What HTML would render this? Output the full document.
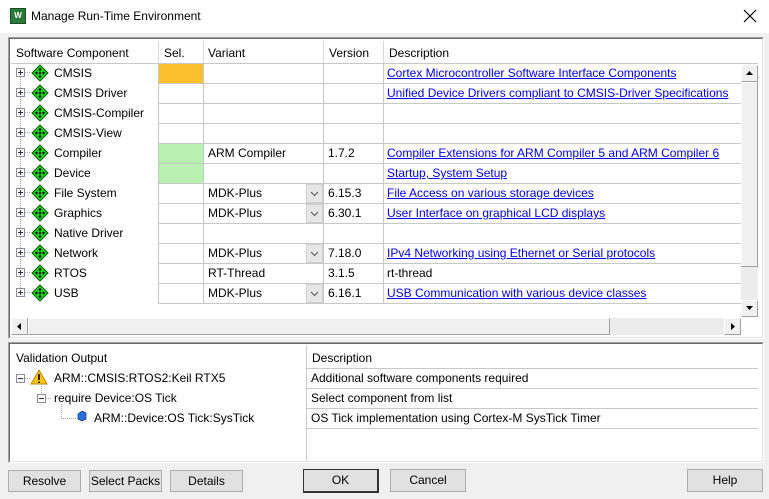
<!DOCTYPE html>
<html><head><meta charset="utf-8"><style>
*{box-sizing:border-box;margin:0;padding:0}
body{width:769px;height:499px;background:#f0f0f0;font-family:"Liberation Sans",sans-serif;font-size:12px;color:#000;position:relative;overflow:hidden}
.a{position:absolute}
.t{position:absolute;white-space:nowrap;line-height:20px}
a{color:#0000ee;text-decoration:underline}
.hl{position:absolute;height:1px;background:#d8d8d8}
.vl{position:absolute;width:1px;background:#d8d8d8}
.btn{position:absolute;background:#e1e1e1;border:1px solid #adadad;text-align:center;line-height:20px;font-size:12px}
.pl{position:absolute;width:9px;height:9px;border:1px solid #8c8c9c;background:#fff;font-size:9px;line-height:7px;text-align:center;color:#333}
.dd{position:absolute;width:17px;height:18px;background:#e6e6e6;border:1px solid #d0d0d0}
</style></head><body>
<div class="a" style="left:0;top:0;width:769px;height:33px;background:#fff"></div>
<div class="a" style="left:10px;top:8px;width:16px;height:16px;background:#2c7a3a;border:1px solid #164d20;color:#fff;font-size:8px;font-weight:bold;text-align:center;line-height:14px">W</div>
<div class="t" style="left:31px;top:6px;font-size:12px">Manage Run-Time Environment</div>
<svg class="a" style="left:743px;top:9px" width="14" height="14"><path d="M1 1L13 13M13 1L1 13" stroke="#000" stroke-width="1.2"/></svg>

<!-- upper panel -->
<div class="a" style="left:8px;top:37px;width:756px;height:302px;border:1px solid #a0a0a0;border-right-color:#fff;border-bottom-color:#fff;background:#fff"></div>
<div class="a" style="left:9px;top:38px;width:754px;height:300px;border:1px solid #696969;border-right-color:#e3e3e3;border-bottom-color:#e3e3e3"></div>
<div class="t" style="left:16px;top:43px">Software Component</div>
<div class="t" style="left:164px;top:43px">Sel.</div>
<div class="t" style="left:208px;top:43px">Variant</div>
<div class="t" style="left:329px;top:43px">Version</div>
<div class="t" style="left:389px;top:43px">Description</div>
<div class="vl" style="left:158px;top:41px;height:22px"></div>
<div class="vl" style="left:203px;top:41px;height:22px"></div>
<div class="vl" style="left:323px;top:41px;height:22px"></div>
<div class="vl" style="left:383px;top:41px;height:22px"></div>
<div class="hl" style="left:11px;top:63px;width:747px;background:#c8c8c8"></div>
<!-- grid -->
<div class="a" style="left:159px;top:64px;width:44px;height:19px;background:#fbc02d"></div>
<div class="a" style="left:159px;top:144px;width:44px;height:19px;background:#b8f0b0"></div>
<div class="a" style="left:159px;top:164px;width:44px;height:19px;background:#b8f0b0"></div>
<div class="vl" style="left:158px;top:63px;height:240px;background:#c8c8c8"></div>
<div class="vl" style="left:203px;top:63px;height:240px;background:#c8c8c8"></div>
<div class="vl" style="left:323px;top:63px;height:240px;background:#c8c8c8"></div>
<div class="vl" style="left:383px;top:63px;height:240px;background:#c8c8c8"></div>
<div class="hl" style="left:158px;top:83px;width:583px;background:#c8c8c8"></div>
<div class="hl" style="left:158px;top:103px;width:583px;background:#c8c8c8"></div>
<div class="hl" style="left:158px;top:123px;width:583px;background:#c8c8c8"></div>
<div class="hl" style="left:158px;top:143px;width:583px;background:#c8c8c8"></div>
<div class="hl" style="left:158px;top:163px;width:583px;background:#c8c8c8"></div>
<div class="hl" style="left:158px;top:183px;width:583px;background:#c8c8c8"></div>
<div class="hl" style="left:158px;top:203px;width:583px;background:#c8c8c8"></div>
<div class="hl" style="left:158px;top:223px;width:583px;background:#c8c8c8"></div>
<div class="hl" style="left:158px;top:243px;width:583px;background:#c8c8c8"></div>
<div class="hl" style="left:158px;top:263px;width:583px;background:#c8c8c8"></div>
<div class="hl" style="left:158px;top:283px;width:583px;background:#c8c8c8"></div>
<div class="hl" style="left:158px;top:303px;width:583px;background:#c8c8c8"></div>
<div class="vl" style="left:20px;top:68px;height:228px;background:none;border-left:1px dotted #a0a0a0"></div>
<svg class="a" style="left:0;top:63px" width="60" height="240">
<defs><g id="dm"><path d="M0 -8L8 0L0 8L-8 0Z" fill="#1ed01e" stroke="#0a600a" stroke-width="1"/><circle cx="0" cy="-3.5" r="1.2"/><circle cx="0" cy="3.5" r="1.2"/><circle cx="-3.5" cy="0" r="1.2"/><circle cx="3.5" cy="0" r="1.2"/><circle cx="0" cy="0" r="1.2"/></g>
<g id="pb"><rect x="16.5" y="5.5" width="8" height="8" fill="#fff" stroke="#8c8c9c"/><path d="M18 9.5h5M20.5 7v5" stroke="#334"/><path d="M25 9.5h6" stroke="#aaa" stroke-dasharray="1 1"/></g></defs>
<g><use href="#pb"/><use href="#dm" x="40" y="10"/></g>
<g transform="translate(0,20)"><use href="#pb"/><use href="#dm" x="40" y="10"/></g>
<g transform="translate(0,40)"><use href="#pb"/><use href="#dm" x="40" y="10"/></g>
<g transform="translate(0,60)"><use href="#pb"/><use href="#dm" x="40" y="10"/></g>
<g transform="translate(0,80)"><use href="#pb"/><use href="#dm" x="40" y="10"/></g>
<g transform="translate(0,100)"><use href="#pb"/><use href="#dm" x="40" y="10"/></g>
<g transform="translate(0,120)"><use href="#pb"/><use href="#dm" x="40" y="10"/></g>
<g transform="translate(0,140)"><use href="#pb"/><use href="#dm" x="40" y="10"/></g>
<g transform="translate(0,160)"><use href="#pb"/><use href="#dm" x="40" y="10"/></g>
<g transform="translate(0,180)"><use href="#pb"/><use href="#dm" x="40" y="10"/></g>
<g transform="translate(0,200)"><use href="#pb"/><use href="#dm" x="40" y="10"/></g>
<g transform="translate(0,220)"><use href="#pb"/><use href="#dm" x="40" y="10"/></g>
</svg>
<div class="t" style="left:54px;top:63px">CMSIS</div>
<div class="t" style="left:54px;top:83px">CMSIS Driver</div>
<div class="t" style="left:54px;top:103px">CMSIS-Compiler</div>
<div class="t" style="left:54px;top:123px">CMSIS-View</div>
<div class="t" style="left:54px;top:143px">Compiler</div>
<div class="t" style="left:54px;top:163px">Device</div>
<div class="t" style="left:54px;top:183px">File System</div>
<div class="t" style="left:54px;top:203px">Graphics</div>
<div class="t" style="left:54px;top:223px">Native Driver</div>
<div class="t" style="left:54px;top:243px">Network</div>
<div class="t" style="left:54px;top:263px">RTOS</div>
<div class="t" style="left:54px;top:283px">USB</div>

<div class="t" style="left:208px;top:143px">ARM Compiler</div><div class="t" style="left:328px;top:143px">1.7.2</div>
<div class="t" style="left:208px;top:183px">MDK-Plus</div><div class="t" style="left:328px;top:183px">6.15.3</div>
<div class="t" style="left:208px;top:203px">MDK-Plus</div><div class="t" style="left:328px;top:203px">6.30.1</div>
<div class="t" style="left:208px;top:243px">MDK-Plus</div><div class="t" style="left:328px;top:243px">7.18.0</div>
<div class="t" style="left:208px;top:263px">RT-Thread</div><div class="t" style="left:328px;top:263px">3.1.5</div>
<div class="t" style="left:208px;top:283px">MDK-Plus</div><div class="t" style="left:328px;top:283px">6.16.1</div>
<svg class="a" style="left:306px;top:184px" width="17" height="120">
<g fill="#e6e6e6" stroke="#d0d0d0"><rect x=".5" y=".5" width="16" height="18"/><rect x=".5" y="20.5" width="16" height="18"/><rect x=".5" y="60.5" width="16" height="18"/><rect x=".5" y="100.5" width="16" height="18"/></g>
<g fill="none" stroke="#555"><path d="M5 8l3.5 3.5L12 8"/><path d="M5 28l3.5 3.5L12 28"/><path d="M5 68l3.5 3.5L12 68"/><path d="M5 108l3.5 3.5L12 108"/></g></svg>

<div class="t" style="left:387px;top:63px"><a>Cortex Microcontroller Software Interface Components</a></div>
<div class="t" style="left:387px;top:83px"><a>Unified Device Drivers compliant to CMSIS-Driver Specifications</a></div>
<div class="t" style="left:387px;top:143px"><a>Compiler Extensions for ARM Compiler 5 and ARM Compiler 6</a></div>
<div class="t" style="left:387px;top:163px"><a>Startup, System Setup</a></div>
<div class="t" style="left:387px;top:183px"><a>File Access on various storage devices</a></div>
<div class="t" style="left:387px;top:203px"><a>User Interface on graphical LCD displays</a></div>
<div class="t" style="left:387px;top:243px"><a>IPv4 Networking using Ethernet or Serial protocols</a></div>
<div class="t" style="left:387px;top:263px">rt-thread</div>
<div class="t" style="left:387px;top:283px"><a>USB Communication with various device classes</a></div>

<!-- vertical scrollbar -->
<div class="a" style="left:741px;top:65px;width:17px;height:252px;background:#ececec"></div>
<div class="a" style="left:741px;top:65px;width:17px;height:17px;background:#f0f0f0;border:1px solid #a0a0a0;border-top-color:#fff;border-left-color:#fff"></div>
<svg class="a" style="left:745px;top:70px" width="9" height="6"><path d="M1 5L4.5 1L8 5Z"/></svg>
<div class="a" style="left:741px;top:82px;width:17px;height:185px;background:#f0f0f0;border:1px solid #a0a0a0;border-top-color:#fff;border-left-color:#fff"></div>
<div class="a" style="left:741px;top:300px;width:17px;height:17px;background:#f0f0f0;border:1px solid #a0a0a0;border-top-color:#fff;border-left-color:#fff"></div>
<svg class="a" style="left:745px;top:305px" width="9" height="6"><path d="M1 1L4.5 5L8 1Z"/></svg>
<!-- horizontal scrollbar -->
<div class="a" style="left:11px;top:318px;width:730px;height:17px;background:#ececec"></div>
<div class="a" style="left:11px;top:318px;width:17px;height:17px;background:#f0f0f0;border:1px solid #a0a0a0;border-top-color:#fff;border-left-color:#fff"></div>
<svg class="a" style="left:16px;top:322px" width="6" height="9"><path d="M5 1L1 4.5L5 8Z"/></svg>
<div class="a" style="left:28px;top:318px;width:582px;height:17px;background:#f0f0f0;border:1px solid #a0a0a0;border-top-color:#fff;border-left-color:#fff"></div>
<div class="a" style="left:724px;top:318px;width:17px;height:17px;background:#f0f0f0;border:1px solid #a0a0a0;border-top-color:#fff;border-left-color:#fff"></div>
<svg class="a" style="left:730px;top:322px" width="6" height="9"><path d="M1 1L5 4.5L1 8Z"/></svg>

<!-- lower panel -->
<div class="a" style="left:8px;top:342px;width:756px;height:121px;border:1px solid #a0a0a0;border-right-color:#fff;border-bottom-color:#fff;background:#fff"></div>
<div class="a" style="left:9px;top:343px;width:754px;height:119px;border:1px solid #696969;border-right-color:#e3e3e3;border-bottom-color:#e3e3e3"></div>
<div class="t" style="left:16px;top:348px">Validation Output</div>
<div class="t" style="left:312px;top:348px">Description</div>
<div class="vl" style="left:306px;top:346px;height:114px;background:#c8c8c8"></div>
<div class="hl" style="left:306px;top:368px;width:452px;background:#c8c8c8"></div>
<div class="hl" style="left:306px;top:388px;width:452px;background:#c8c8c8"></div>
<div class="hl" style="left:306px;top:408px;width:452px;background:#c8c8c8"></div>
<div class="hl" style="left:306px;top:428px;width:452px;background:#c8c8c8"></div>
<svg class="a" style="left:0;top:368px" width="120" height="60">
<rect x="16.5" y="6.5" width="8" height="8" fill="#fff" stroke="#8c8c9c"/><path d="M18 10.5h5" stroke="#334"/>
<path d="M25 10.5h6" stroke="#aaa" stroke-dasharray="1 1"/>
<path d="M39 2L47 16H31Z" fill="#f6c319" stroke="#c08a00"/><path d="M39 6v6M39 13.5v1.5" stroke="#000" stroke-width="1.6"/>
<path d="M41.5 16v10" stroke="#aaa" stroke-dasharray="1 1"/>
<rect x="37.5" y="26.5" width="8" height="8" fill="#fff" stroke="#8c8c9c"/><path d="M39 30.5h5" stroke="#334"/>
<path d="M46 30.5h6" stroke="#aaa" stroke-dasharray="1 1"/>
<path d="M61.5 36v14.5h16" stroke="#aaa" stroke-dasharray="1 1" fill="none"/>
<path d="M78 46l4 -3l4 2v6l-4 2l-4-2z" fill="#2a6fd6" stroke="#103a80" stroke-width=".7"/>
</svg>
<div class="t" style="left:54px;top:368px">ARM::CMSIS:RTOS2:Keil RTX5</div>
<div class="t" style="left:54px;top:388px">require Device:OS Tick</div>
<div class="t" style="left:94px;top:408px">ARM::Device:OS Tick:SysTick</div>
<div class="t" style="left:311px;top:368px">Additional software components required</div>
<div class="t" style="left:311px;top:388px">Select component from list</div>
<div class="t" style="left:311px;top:408px">OS Tick implementation using Cortex-M SysTick Timer</div>

<!-- buttons -->
<div class="btn" style="left:8px;top:470px;width:73px;height:22px">Resolve</div>
<div class="btn" style="left:89px;top:470px;width:73px;height:22px">Select Packs</div>
<div class="btn" style="left:170px;top:470px;width:73px;height:22px">Details</div>
<div class="btn" style="left:303px;top:469px;width:76px;height:24px;border:1px solid #333;border-right-width:2px;border-bottom-width:2px">OK</div>
<div class="btn" style="left:390px;top:469px;width:76px;height:23px">Cancel</div>
<div class="btn" style="left:687px;top:469px;width:76px;height:23px">Help</div>
</body></html>
